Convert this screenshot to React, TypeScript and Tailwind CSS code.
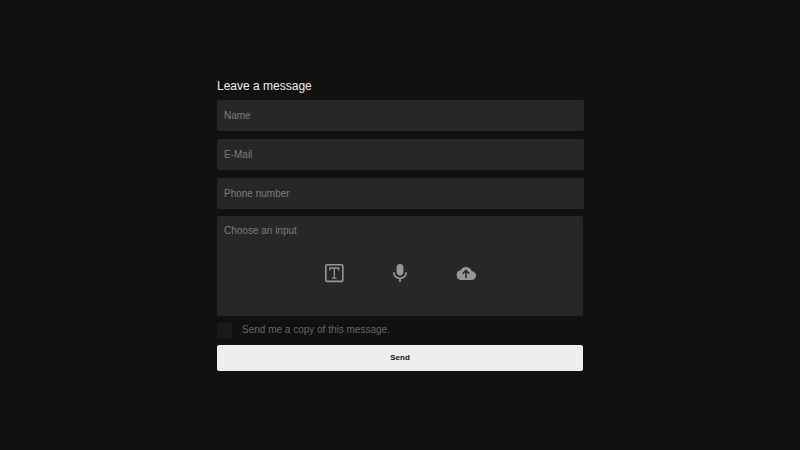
const fields = [
  { id: "name", label: "Name", type: "text" },
  { id: "email", label: "E-Mail", type: "email" },
  { id: "phone", label: "Phone number", type: "tel" },
];

function TextBoxIcon() {
  return (
    <svg viewBox="0 0 20 20" className="size-5" fill="none" stroke="currentColor" aria-hidden="true">
      <rect x="1.8" y="1.8" width="17" height="16.6" rx="1.2" strokeWidth="1.6" />
      <path d="M5.9 7.4V5h8.8v2.4M10.3 5v10.2M8 15.2h4.6" strokeWidth="1.3" />
    </svg>
  );
}

function MicIcon() {
  return (
    <svg viewBox="0 0 20 20" className="size-5" fill="none" stroke="currentColor" aria-hidden="true">
      <rect x="6.6" y="1" width="6.8" height="11.4" rx="3.4" fill="currentColor" stroke="none" />
      <path d="M3.8 9.2v.3a6.2 5.8 0 0 0 12.4 0v-.3M10 15.3V19" strokeWidth="1.7" />
    </svg>
  );
}

function CloudIcon() {
  return (
    <svg viewBox="0 0 20 20" className="size-5" aria-hidden="true">
      <path
        d="M15.8 8.3A6.1 6.1 0 0 0 4.6 7.3 4.9 4.9 0 0 0 5.2 17h10.4a4.35 4.35 0 0 0 .2-8.7z"
        fill="currentColor"
      />
      <path d="M10 15V7.6M6.7 10.7 10 7.4l3.3 3.3" fill="none" stroke="#272727" strokeWidth="1.5" />
    </svg>
  );
}

const inputs = [
  { label: "Text", Icon: TextBoxIcon },
  { label: "Voice", Icon: MicIcon },
  { label: "Upload", Icon: CloudIcon },
];

export default function App() {
  return (
    <main className="flex min-h-screen items-center justify-center bg-[#111111] pb-px font-['Liberation_Sans',Arial,sans-serif] text-[10px]">
      <form className="flex w-full max-w-[366px] flex-col" onSubmit={(e) => e.preventDefault()}>
        <h1 className="mb-1.5 text-xs leading-4 text-[#eeeeee]">Leave a message</h1>
        <div className="-mr-px mb-[7px] flex flex-col gap-2">
          {fields.map((f) => (
            <input
              key={f.id}
              id={f.id}
              type={f.type}
              aria-label={f.label}
              placeholder={f.label}
              className="h-[31px] rounded-xs bg-[#272727] px-[7px] text-[#eeeeee] outline-none placeholder:text-[#7c7c7c]"
            />
          ))}
        </div>
        <fieldset className="h-25 rounded-xs bg-[#272727] px-[7px] pt-[7px] text-[#7c7c7c]">
          <p className="leading-4">Choose an input</p>
          <div className="mt-6 flex items-center justify-center gap-[46px] text-[#969696]">
            {inputs.map(({ label, Icon }) => (
              <button key={label} type="button" aria-label={label} className="size-5">
                <Icon />
              </button>
            ))}
          </div>
        </fieldset>
        <label className="mt-1.5 mb-[7px] flex items-center gap-2.5 leading-4 text-[#666666]">
          <input type="checkbox" className="size-[15px] appearance-none bg-[#1a1a1a] checked:bg-[#666666]" />
          Send me a copy of this message.
        </label>
        <button type="submit" className="h-[26px] rounded-xs bg-[#eeeeee] text-[8px] font-bold text-[#111111]">
          Send
        </button>
      </form>
    </main>
  );
}
